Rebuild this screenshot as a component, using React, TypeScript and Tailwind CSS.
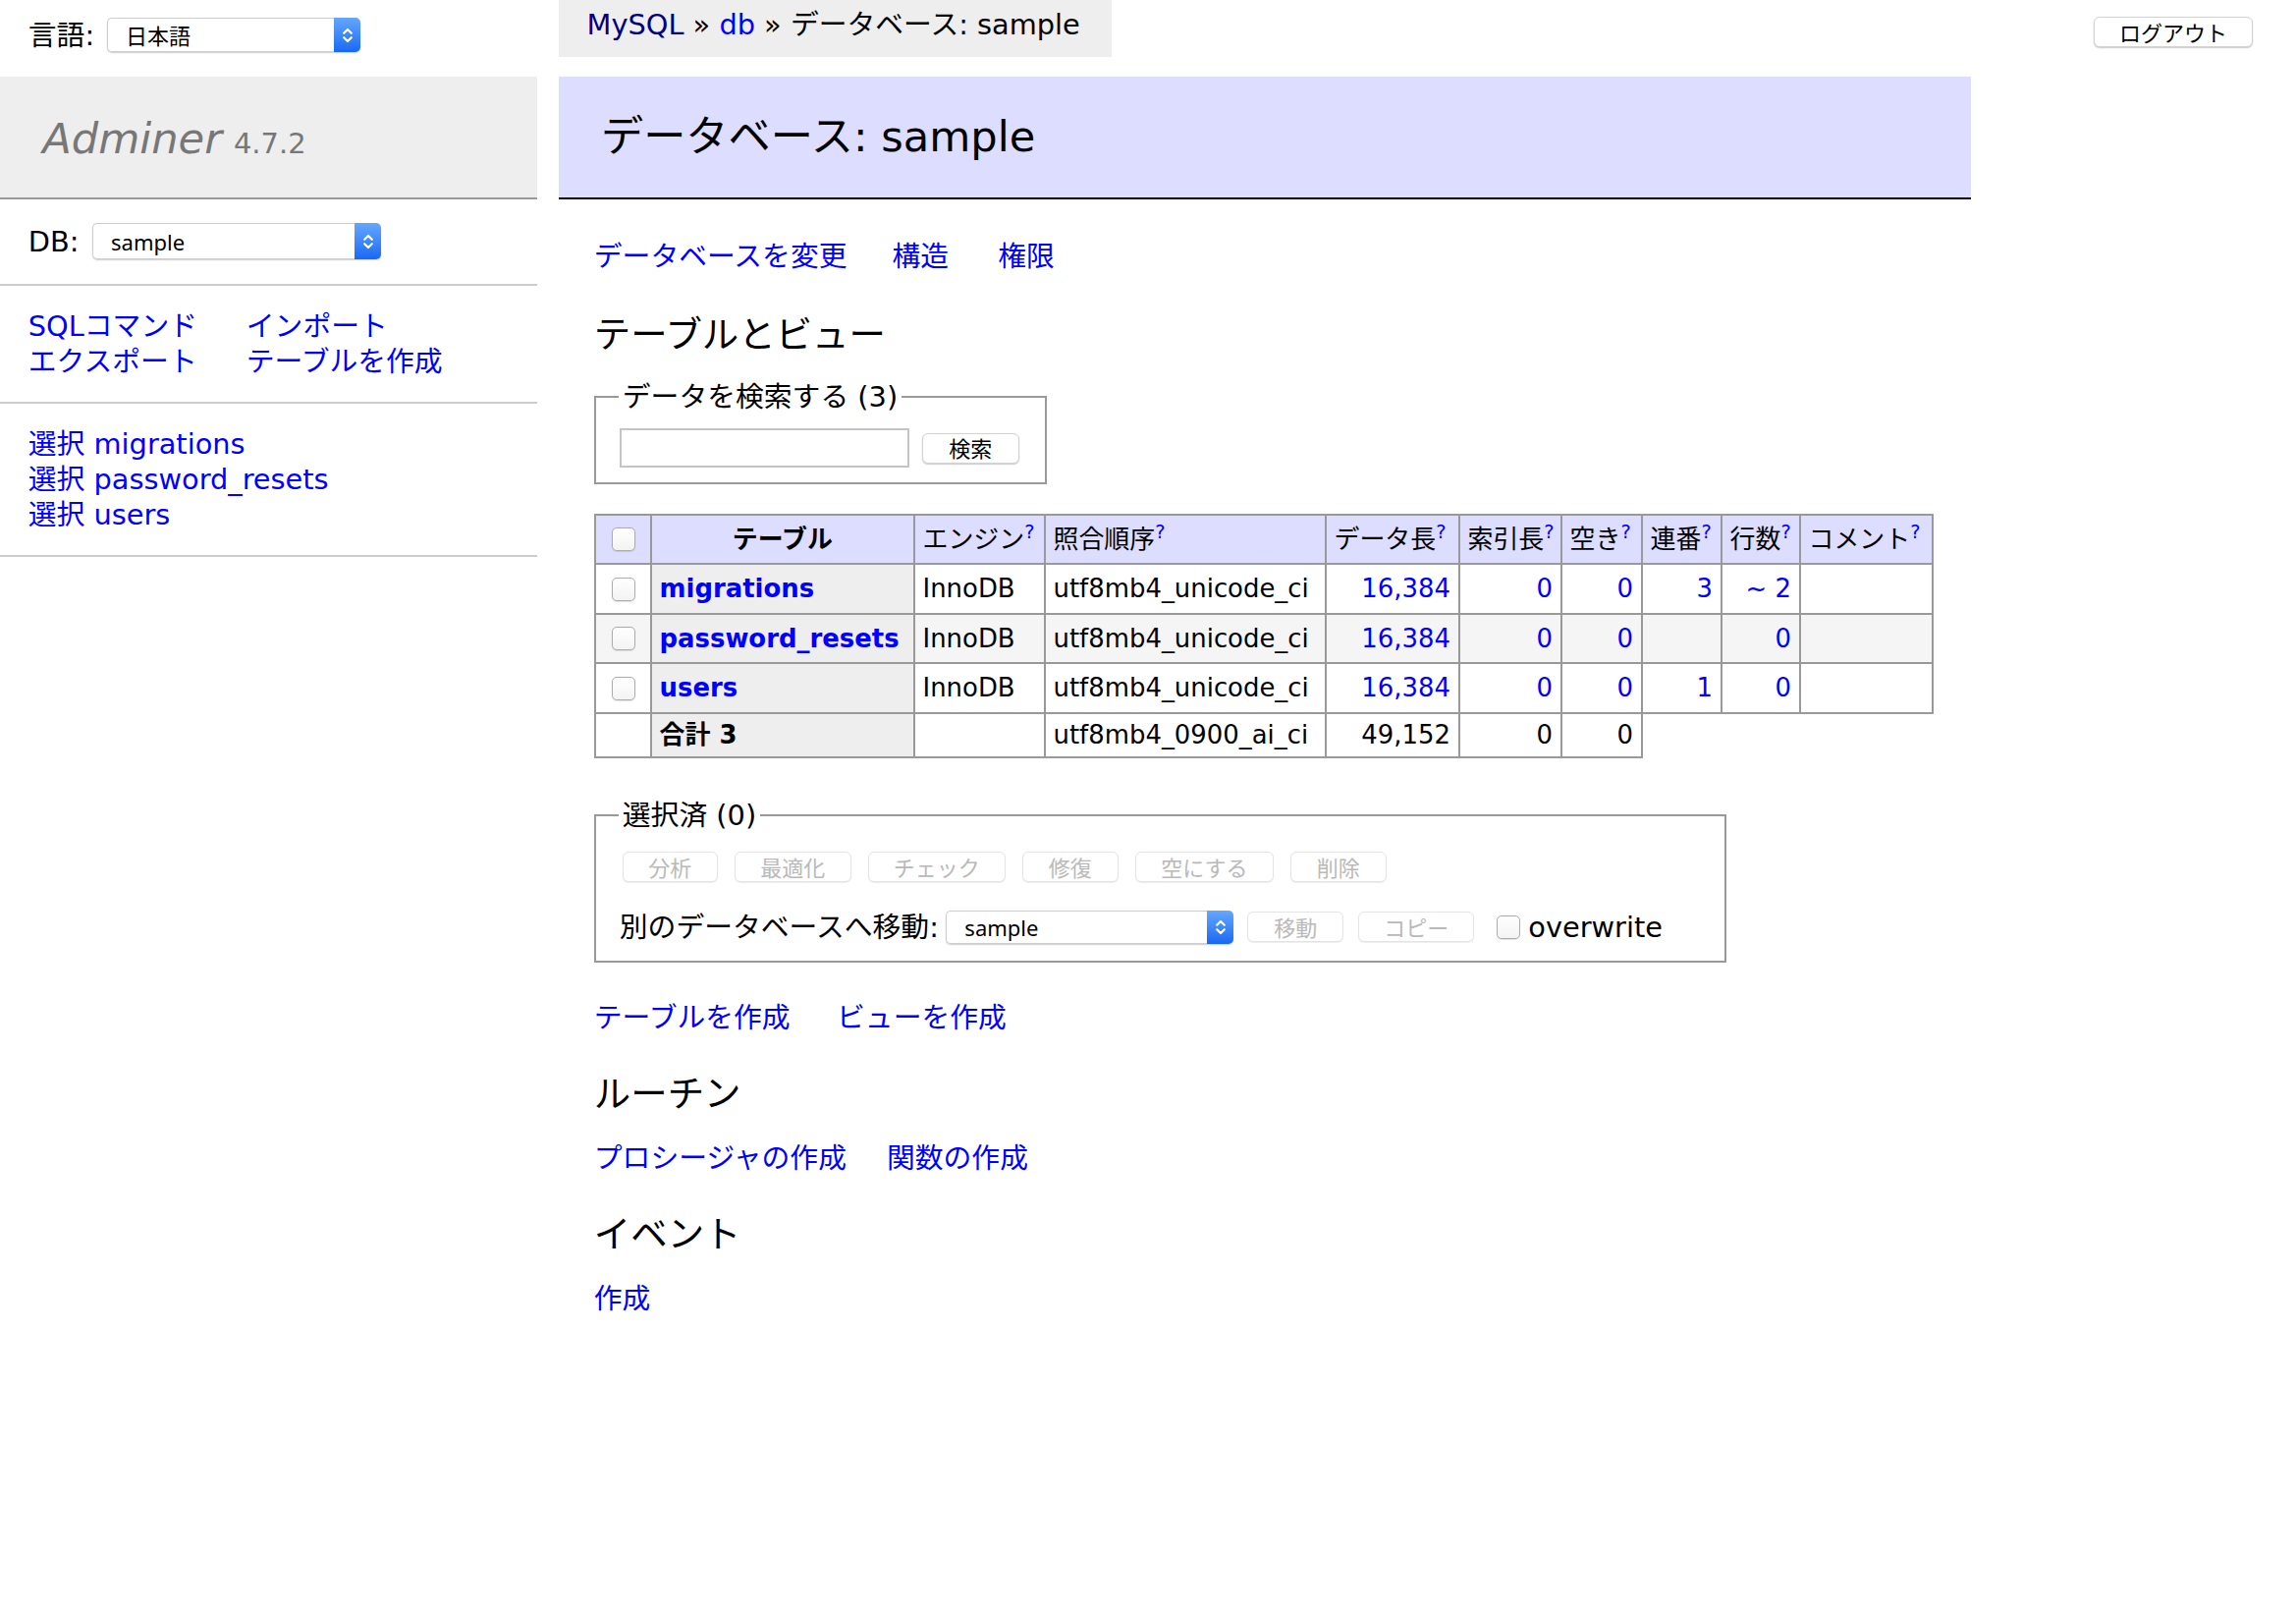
import React from "react";

const BODY = "font-['DejaVu_Sans','Noto_Sans_CJK_JP',sans-serif]";
const CTRL = "font-['Noto_Sans','Noto_Sans_CJK_JP',sans-serif]";

function MacSelect({ value, className }: { value: string; className: string }) {
  return (
    <div className={`flex items-stretch rounded-[5px] bg-white shadow-[0_1px_1.5px_rgba(0,0,0,0.2)] ${className}`}>
      <div className={`flex flex-1 items-center rounded-l-[5px] border border-r-0 border-[#cdcdcd] pl-[18px] ${CTRL} text-[22px] leading-none text-black`}>
        {value}
      </div>
      <div className="flex w-[27px] items-center justify-center rounded-r-[5px] bg-linear-to-b from-[#64a7fd] to-[#1768f3]">
        <svg width="14" height="24" viewBox="0 0 14 24">
          <path
            d="M3.2 9.8 L7 6 L10.8 9.8 M3.2 14.2 L7 18 L10.8 14.2"
            stroke="white"
            strokeWidth="2.2"
            fill="none"
            strokeLinecap="round"
            strokeLinejoin="round"
          />
        </svg>
      </div>
    </div>
  );
}

function MacButton({ label, disabled, className }: { label: string; disabled?: boolean; className: string }) {
  return (
    <button
      type="button"
      className={`flex h-[31px] shrink-0 items-center justify-center rounded-[6px] border bg-white ${CTRL} text-[22px] leading-none ${
        disabled
          ? "border-[#e4e4e4] text-[#b9b9b9] shadow-[0_1px_1px_rgba(0,0,0,0.07)]"
          : "border-[#d2d2d2] text-black shadow-[0_1px_1.5px_rgba(0,0,0,0.22)]"
      } ${className}`}
    >
      {label}
    </button>
  );
}

function Box({ className }: { className: string }) {
  return (
    <span
      className={`h-[24px] w-[24px] rounded-[5px] border-[1.5px] border-[#acacac] bg-linear-to-b from-white to-[#f3f3f3] shadow-[0_0.5px_1px_rgba(0,0,0,0.12)] ${className}`}
    />
  );
}

function Help() {
  return <sup className="text-[#00f]">?</sup>;
}

const TD = "border-2 border-[#999] px-[7.78px] py-[5.18px]";
const TDR = "border-2 border-[#999] px-[7.78px] py-[5.18px] text-right";
const TH = "border-2 border-[#999] bg-[#eee] px-[7.78px] py-[5.18px] text-left font-bold";

type Row = { name: string; data: string; idx: string; free: string; ai: string; rows: string; odd: boolean };

const ROWS: Row[] = [
  { name: "migrations", data: "16,384", idx: "0", free: "0", ai: "3", rows: "~ 2", odd: false },
  { name: "password_resets", data: "16,384", idx: "0", free: "0", ai: "", rows: "0", odd: true },
  { name: "users", data: "16,384", idx: "0", free: "0", ai: "1", rows: "0", odd: false },
];

export default function App() {
  return (
    <div className={`min-h-[1636px] w-[2338px] bg-white text-black ${BODY} text-[28.8px] leading-[36px]`}>
      <div className="flex">
        {/* Sidebar */}
        <aside className="w-[547.2px] shrink-0">
          <div className="h-[77.6px] px-[28.8px] pt-[10px]">
            <div className="flex h-[51.84px] items-center">
              <span>言語:</span>
              <MacSelect value="日本語" className="ml-[13px] h-[35px] w-[258px]" />
            </div>
          </div>
          <h1 className="border-b-2 border-[#999] bg-[#eee] px-[43.2px] py-[34.56px] text-[43.2px] font-normal text-[#777]">
            <div className="flex h-[54px] items-baseline pt-[2px] leading-[54px]">
              <span className="italic">Adminer</span>
              <span className="ml-[12px] text-[28.94px] leading-none">4.7.2</span>
            </div>
          </h1>
          <div className="border-b-2 border-[#ccc] px-[28.8px] py-[23.04px]">
            <div className="flex h-[40px] items-center">
              <span>DB:</span>
              <MacSelect value="sample" className="ml-[13.6px] h-[37px] w-[294px]" />
            </div>
          </div>
          <div className="grid grid-cols-[222px_auto] border-b-2 border-[#ccc] px-[28.8px] py-[23.04px] whitespace-nowrap text-[#00f]">
            <span>SQLコマンド</span>
            <span>インポート</span>
            <span>エクスポート</span>
            <span>テーブルを作成</span>
          </div>
          <ul className="border-b-2 border-[#ccc] px-[28.8px] py-[23.04px] whitespace-nowrap text-[#00f]">
            <li>選択 migrations</li>
            <li>選択 password_resets</li>
            <li>選択 users</li>
          </ul>
        </aside>

        {/* Main */}
        <main className="ml-[57.6px] w-[1442px] shrink-0">
          <div className="-ml-[36px] h-[57.6px] w-fit bg-[#eee] pr-[32px] pl-[28.8px] leading-[51.84px] whitespace-nowrap">
            <span className="text-[#000080]">MySQL</span> » <span className="text-[#00f]">db</span> » データベース: sample
          </div>
          <div className="w-[1402px] pt-[20px]">
            <h2 className="-ml-[36px] mb-[40px] border-b-2 border-black bg-[#ddf] px-[43.2px] py-[34.56px] text-[43.2px] font-normal leading-[54px]">
              データベース: sample
            </h2>
            <div className="flex whitespace-nowrap text-[#00f]">
              <span>データベースを変更</span>
              <span className="ml-[46px]">構造</span>
              <span className="ml-[50px]">権限</span>
            </div>
            <h3 className="mt-[39px] text-[37.44px] font-normal leading-[46.8px]">テーブルとビュー</h3>

            <fieldset className="mt-[21.5px] w-[461px] border-2 border-[#999] px-[23.04px] pt-[14.4px] pb-[14.4px]">
              <legend className="px-[4px] leading-[36px]">データを検索する (3)</legend>
              <div className="flex h-[40px] items-center">
                <div className="ml-[1px] h-[40px] w-[295px] border-2 border-[#c4c4c4] bg-white" />
                <MacButton label="検索" className="ml-[13px] h-[30px] w-[99px]" />
              </div>
            </fieldset>

            <table className="mt-[30px] w-[1362px] table-fixed border-collapse text-[25.92px] leading-[32.4px] whitespace-nowrap">
              <colgroup>
                <col className="w-[57px]" />
                <col className="w-[268px]" />
                <col className="w-[133px]" />
                <col className="w-[286px]" />
                <col className="w-[136px]" />
                <col className="w-[104px]" />
                <col className="w-[82px]" />
                <col className="w-[81px]" />
                <col className="w-[80px]" />
                <col className="w-[135px]" />
              </colgroup>
              <thead>
                <tr className="h-[50.5px] bg-[#ddf]">
                  <td className={TD}>
                    <Box className="ml-[8px] block" />
                  </td>
                  <th className="border-2 border-[#999] px-[12.96px] py-[5.18px] text-center font-bold">テーブル</th>
                  <td className={TD}>
                    エンジン<Help />
                  </td>
                  <td className={TD}>
                    照合順序<Help />
                  </td>
                  <td className={TD}>
                    データ長<Help />
                  </td>
                  <td className={TD}>
                    索引長<Help />
                  </td>
                  <td className={TD}>
                    空き<Help />
                  </td>
                  <td className={TD}>
                    連番<Help />
                  </td>
                  <td className={TD}>
                    行数<Help />
                  </td>
                  <td className={TD}>
                    コメント<Help />
                  </td>
                </tr>
              </thead>
              <tbody>
                {ROWS.map((r) => (
                  <tr key={r.name} className={r.odd ? "h-[50.5px] bg-[#f5f5f5]" : "h-[50.5px] bg-white"}>
                    <td className={TD}>
                      <Box className="ml-[8px] block" />
                    </td>
                    <th className={TH}>
                      <span className="text-[#00f]">{r.name}</span>
                    </th>
                    <td className={TD}>InnoDB</td>
                    <td className={TD}>utf8mb4_unicode_ci</td>
                    <td className={`${TDR} text-[#00f]`}>{r.data}</td>
                    <td className={`${TDR} text-[#00f]`}>{r.idx}</td>
                    <td className={`${TDR} text-[#00f]`}>{r.free}</td>
                    <td className={`${TDR} text-[#00f]`}>{r.ai}</td>
                    <td className={`${TDR} text-[#00f]`}>{r.rows}</td>
                    <td className={TD}></td>
                  </tr>
                ))}
                <tr className="h-[44px]">
                  <td className={TD}></td>
                  <th className={TH}>合計 3</th>
                  <td className={TD}></td>
                  <td className={TD}>utf8mb4_0900_ai_ci</td>
                  <td className={TDR}>49,152</td>
                  <td className={TDR}>0</td>
                  <td className={TDR}>0</td>
                </tr>
              </tbody>
            </table>

            <div className="mt-[40px] pb-[14.4px]">
              <fieldset className="w-[1153px] border-2 border-[#999] px-[23.04px] pt-[14.4px] pb-[14.4px]">
                <legend className="px-[4px] leading-[36px]">選択済 (0)</legend>
                <div className="flex h-[42px] items-center gap-[17px] pl-[4px]">
                  <MacButton disabled label="分析" className="w-[97px]" />
                  <MacButton disabled label="最適化" className="w-[119px]" />
                  <MacButton disabled label="チェック" className="w-[140px]" />
                  <MacButton disabled label="修復" className="w-[98px]" />
                  <MacButton disabled label="空にする" className="w-[141px]" />
                  <MacButton disabled label="削除" className="w-[98px]" />
                </div>
                <div className="mt-[20px] flex h-[40px] items-center whitespace-nowrap">
                  <span className="ml-[1px]">別のデータベースへ移動:</span>
                  <MacSelect value="sample" className="ml-[7.5px] h-[34px] w-[293px]" />
                  <MacButton disabled label="移動" className="ml-[14px] w-[98px]" />
                  <MacButton disabled label="コピー" className="ml-[15px] w-[118px]" />
                  <Box className="ml-[23px] inline-block" />
                  <span className="ml-[8px]">overwrite</span>
                </div>
              </fieldset>
            </div>

            <div className="mt-[23.04px] flex whitespace-nowrap text-[#00f]">
              <span>テーブルを作成</span>
              <span className="ml-[47.4px]">ビューを作成</span>
            </div>
            <h3 className="mt-[37.44px] text-[37.44px] font-normal leading-[46.8px]">ルーチン</h3>
            <div className="mt-[23.04px] flex whitespace-nowrap text-[#00f]">
              <span>プロシージャの作成</span>
              <span className="ml-[41px]">関数の作成</span>
            </div>
            <h3 className="mt-[37.44px] text-[37.44px] font-normal leading-[46.8px]">イベント</h3>
            <div className="mt-[23.04px] flex whitespace-nowrap text-[#00f]">
              <span>作成</span>
            </div>
          </div>
        </main>

        <div className="mr-[44px] ml-auto pt-[17px]">
          <MacButton label="ログアウト" className="h-[31px] w-[162px]" />
        </div>
      </div>
    </div>
  );
}
